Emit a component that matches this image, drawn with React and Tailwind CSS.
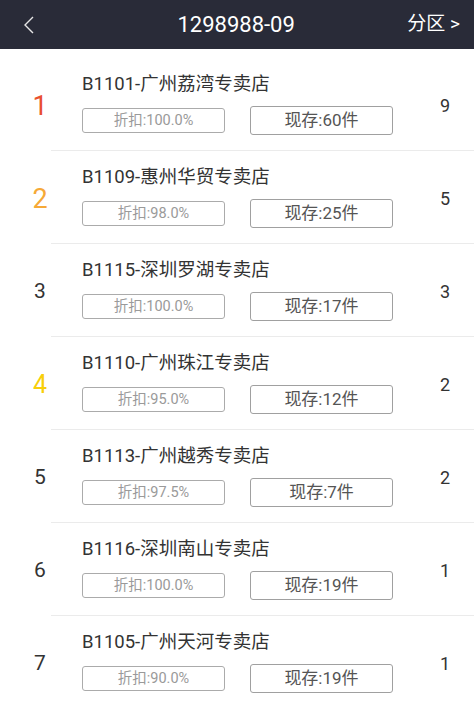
import React from 'react';

const stores = [
  { rank: 1, name: 'B1101-广州荔湾专卖店', discount: '100.0%', stock: 60, count: 9, color: 'text-[#e9502f] text-[27px] pt-[5px]' },
  { rank: 2, name: 'B1109-惠州华贸专卖店', discount: '98.0%', stock: 25, count: 5, color: 'text-[#f6a937] text-[27px] pt-[5px]' },
  { rank: 3, name: 'B1115-深圳罗湖专卖店', discount: '100.0%', stock: 17, count: 3, color: 'text-[#333333] text-[21px] pt-[2px]' },
  { rank: 4, name: 'B1110-广州珠江专卖店', discount: '95.0%', stock: 12, count: 2, color: 'text-[#f8cf0a] text-[25px] pt-[3px]' },
  { rank: 5, name: 'B1113-广州越秀专卖店', discount: '97.5%', stock: 7, count: 2, color: 'text-[#333333] text-[21px] pt-[2px]' },
  { rank: 6, name: 'B1116-深圳南山专卖店', discount: '100.0%', stock: 19, count: 1, color: 'text-[#333333] text-[21px] pt-[2px]' },
  { rank: 7, name: 'B1105-广州天河专卖店', discount: '90.0%', stock: 19, count: 1, color: 'text-[#333333] text-[21px] pt-[2px]' },
];

function StoreRow({ store }) {
  return (
    <div>
      <div className="flex h-[92px] items-center">
        <div className={`w-[80px] text-center leading-none ${store.color}`}>{store.rank}</div>
        <div className="flex flex-1 flex-col self-stretch pl-[2px] pt-[14px]">
          <div className="text-[18.5px] leading-[24px] text-[#333333]">{store.name}</div>
          <div className="mt-[10px] flex items-center gap-[25px]">
            <div className="flex h-[25px] w-[143px] items-center justify-center rounded-[3px] border border-[#ababab] text-[14.5px] text-[#9a9a9a]">
              折扣:{store.discount}
            </div>
            <div className="flex h-[29px] w-[143px] items-center justify-center rounded-[3px] border border-[#a0a0a0] text-[17px] text-[#555555]">
              现存:{store.stock}件
            </div>
          </div>
        </div>
        <div className="w-[56px] pr-[2px] pt-[4px] text-center text-[18px] leading-none text-[#333333]">{store.count}</div>
      </div>
      <div className="ml-[51px] h-px bg-[#ebebeb]" />
    </div>
  );
}

export default function App() {
  return (
    <div className="h-[701px] w-[474px] overflow-hidden bg-white font-['Roboto','Noto_Sans_CJK_SC',sans-serif]">
      {/* header */}
      <div className="flex h-[49px] items-center justify-between bg-[#292b38] pl-[23px] pr-[14px] text-white">
        <svg width="12" height="20" viewBox="0 0 12 20" fill="none">
          <polyline points="10,2 2,10 10,18" stroke="#e6e6e6" strokeWidth="1.4" />
        </svg>
        <div className="ml-[30px] text-[22px]">1298988-09</div>
        <div className="text-[19px]">分区 &gt;</div>
      </div>

      <div className="pt-[9px]">
        {stores.map((s) => (
          <StoreRow key={s.rank} store={s} />
        ))}
      </div>
    </div>
  );
}
